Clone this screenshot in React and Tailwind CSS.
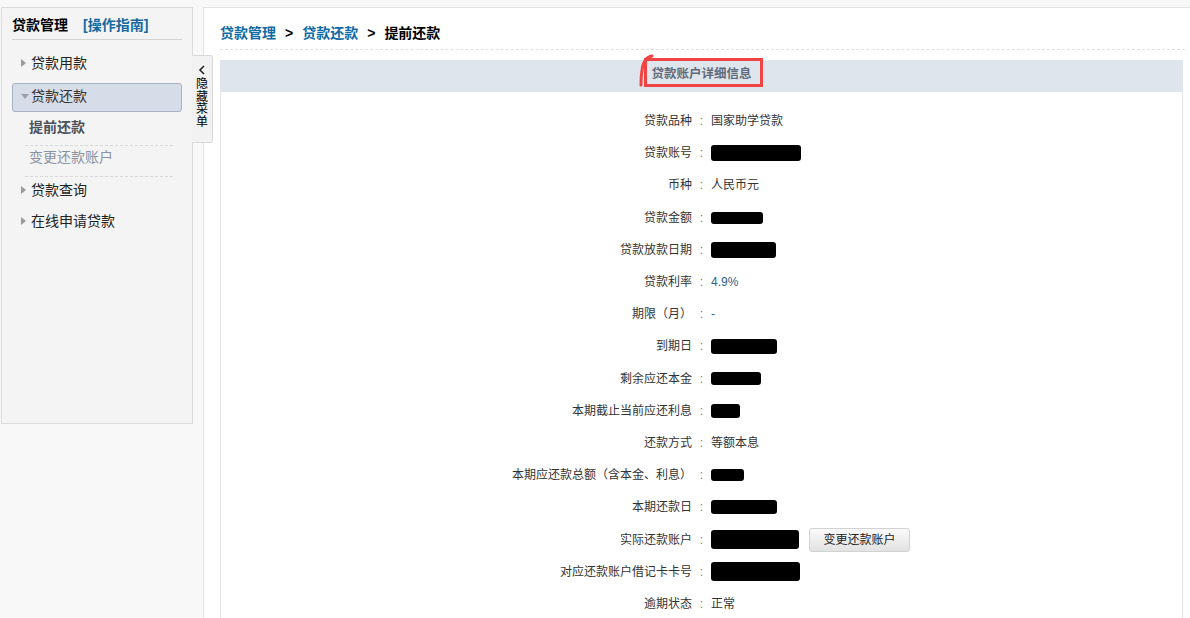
import React from "react";

const rows = [
  { label: "贷款品种", text: "国家助学贷款" },
  { label: "贷款账号", blot: "w-[90px] h-[16px]" },
  { label: "币种", text: "人民币元" },
  { label: "贷款金额", blot: "w-[52px] h-[12px]" },
  { label: "贷款放款日期", blot: "w-[65px] h-[16px]" },
  { label: "贷款利率", text: "4.9%", blue: true },
  { label: "期限（月）", text: "-", blue: true },
  { label: "到期日", blot: "w-[66px] h-[15px]" },
  { label: "剩余应还本金", blot: "w-[50px] h-[13px]" },
  { label: "本期截止当前应还利息", blot: "w-[29px] h-[14px]" },
  { label: "还款方式", text: "等额本息" },
  { label: "本期应还款总额（含本金、利息）", blot: "w-[33px] h-[12px]" },
  { label: "本期还款日", blot: "w-[66px] h-[14px]" },
  { label: "实际还款账户", blot: "w-[88px] h-[19px]", button: true },
  { label: "对应还款账户借记卡卡号", blot: "w-[89px] h-[19px]" },
  { label: "逾期状态", text: "正常" },
];

function Arrow({ open }) {
  if (open)
    return (
      <span className="inline-block w-0 h-0 border-x-[4px] border-x-transparent border-t-[5px] border-t-[#9aa0a8] mr-[2px]" />
    );
  return (
    <span className="inline-block w-0 h-0 border-y-[4px] border-y-transparent border-l-[5px] border-l-[#9a9a9a] mr-[5px]" />
  );
}

export default function App() {
  return (
    <div className="flex h-[618px] overflow-hidden bg-[#f8f8f8] pt-[7px] text-[12px] text-[#333] font-['Liberation_Sans','Noto_Sans_CJK_SC',sans-serif]">
      {/* Sidebar */}
      <aside className="relative w-[203px] shrink-0">
        <div className="ml-[1px] w-[192px] h-[417px] border border-[#dcdcdc] bg-[#f4f4f4]">
          <div className="mx-[10px] pt-[9px] pb-[6px] border-b border-[#d4d4d4] flex items-center leading-[16px]">
            <span className="text-[14px] font-bold text-black">贷款管理</span>
            <span className="ml-[15px] text-[14px] font-bold text-[#1469a0]">[操作指南]</span>
          </div>

          <div className="mt-[8px] h-[30px] pl-[19px] flex items-center text-[14px] text-[#222]">
            <Arrow />
            贷款用款
          </div>
          <div className="mt-[5px] mx-[10px] h-[29px] pl-[8px] pb-[3px] flex items-center text-[14px] text-[#333] bg-[#d6dce8] border border-[#a9b1c2] rounded-[3px]">
            <Arrow open />
            贷款还款
          </div>
          <div className="ml-[23px] w-[148px]">
            <div className="h-[34px] pt-[7px] pl-[4px] leading-[16px] text-[14px] font-bold text-[#4d525c] border-b border-dashed border-[#d8d8d8]">
              提前还款
            </div>
            <div className="h-[31px] pt-[3px] pl-[4px] leading-[16px] text-[14px] text-[#8a93a3] border-b border-dashed border-[#d8d8d8]">
              变更还款账户
            </div>
          </div>
          <div className="h-[26px] pl-[19px] flex items-center text-[14px] text-[#222]">
            <Arrow />
            贷款查询
          </div>
          <div className="h-[36px] pl-[19px] flex items-center text-[14px] text-[#222]">
            <Arrow />
            在线申请贷款
          </div>
        </div>

        {/* hide menu tab */}
        <div className="absolute left-[192px] top-[48px] w-[21px] h-[88px] bg-[#f2f2f2] border border-l-0 border-[#d8d8d8] rounded-r-[3px] flex flex-col items-center pt-[9px] z-10">
          <svg width="8" height="10" viewBox="0 0 8 10">
            <polyline points="6,1 2,5 6,9" fill="none" stroke="#222" strokeWidth="1.6" />
          </svg>
          <div className="mt-[3px] flex flex-col items-center text-[12px] text-black">
            <div className="h-[12.5px] leading-[12.5px]">隐</div>
            <div className="h-[12.5px] leading-[12.5px]">藏</div>
            <div className="h-[12.5px] leading-[12.5px]">菜</div>
            <div className="h-[12.5px] leading-[12.5px]">单</div>
          </div>
        </div>
      </aside>

      {/* Main */}
      <main className="flex-1 bg-white border-l border-t border-[#e2e2e2]">
        <div className="pl-[16px] pt-[17px] leading-[16px] text-[14px] font-bold flex items-center">
          <span className="text-[#0f6aa3]">贷款管理</span>
          <span className="mx-[9px] text-black">&gt;</span>
          <span className="text-[#0f6aa3]">贷款还款</span>
          <span className="mx-[9px] text-black">&gt;</span>
          <span className="text-black">提前还款</span>
        </div>
        <div className="mt-[8px] ml-[16px] mr-[5px] border-b border-dashed border-[#e0e0e0]" />

        <div className="mt-[10px] ml-[16px] mr-[7px]">
          <div className="relative h-[32px] bg-[#dfe5ed] flex items-center justify-center">
            <span className="font-bold text-[#5f6b7a] text-[12.5px] pb-[3px]">贷款账户详细信息</span>
            <div className="absolute left-[424px] top-[-2px] w-[119px] h-[29px] border-[3px] border-[#f04444]" />
            <svg className="absolute left-[418px] top-[-6px]" width="16" height="34" viewBox="0 0 16 34">
              <path d="M14 2 C8 3 5 9 4 16 C3 22 3 27 3 31" fill="none" stroke="#f04444" strokeWidth="3" strokeLinecap="round" />
            </svg>
          </div>

          <div className="border-x border-[#e4e4e4] pt-[13px] pb-[20px]">
            {rows.map((r) => (
              <div key={r.label} className="h-[32.2px] flex items-center">
                <div className="w-[471px] text-right text-[#333]">{r.label}</div>
                <div className="w-[19px] text-center text-[#777]">:</div>
                <div className="flex items-center">
                  {r.text && (
                    <span className={r.blue ? "text-[#2b5f8c]" : "text-[#333]"}>{r.text}</span>
                  )}
                  {r.blot && <span className={`inline-block bg-black rounded-[3px] ${r.blot}`} />}
                  {r.button && (
                    <button className="ml-[10px] w-[101px] h-[24px] rounded-[3px] border border-[#d2d2d2] bg-gradient-to-b from-[#fafafa] to-[#e2e2e2] text-[12px] text-[#222]">
                      变更还款账户
                    </button>
                  )}
                </div>
              </div>
            ))}
          </div>
        </div>
      </main>
    </div>
  );
}
